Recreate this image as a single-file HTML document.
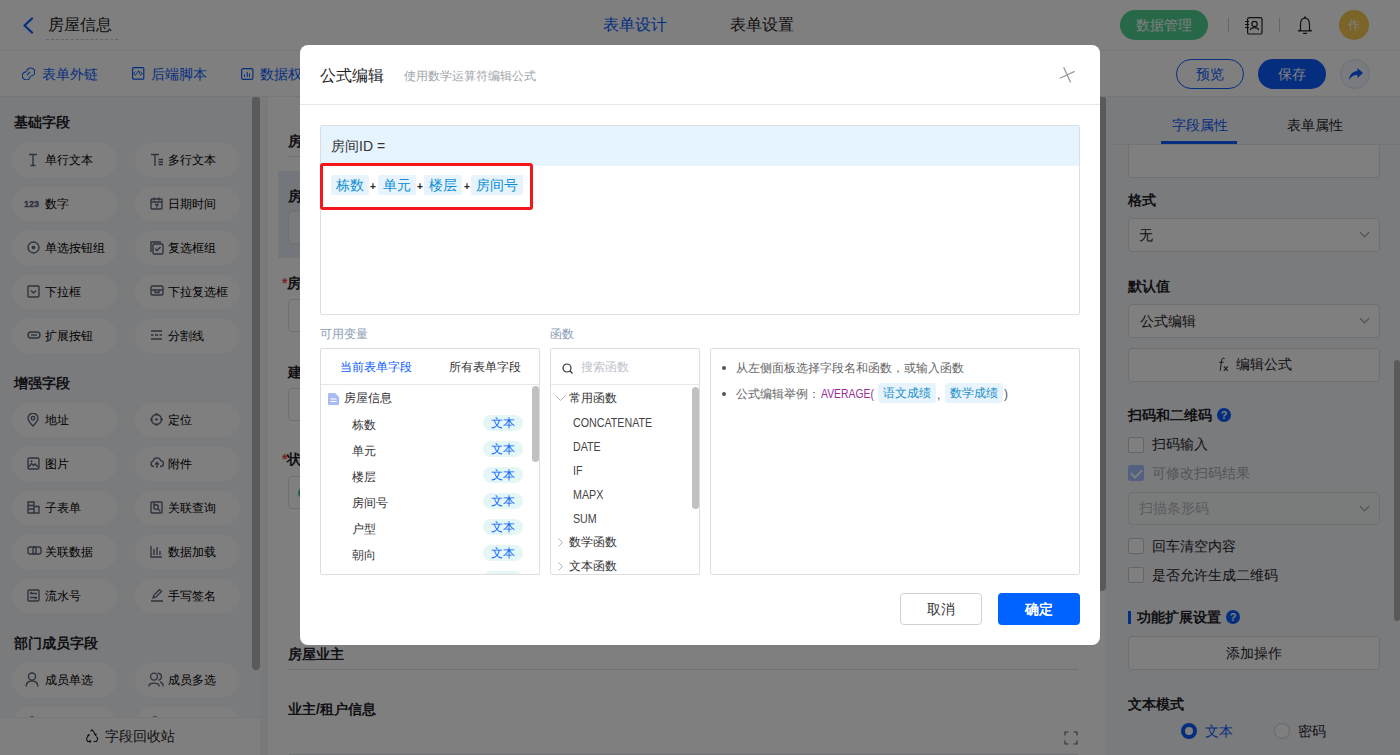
<!DOCTYPE html>
<html><head><meta charset="utf-8">
<style>
*{box-sizing:border-box;margin:0;padding:0}
html,body{width:1400px;height:755px;overflow:hidden;background:#fff}
body{font-family:"Liberation Sans",sans-serif;color:#1f2329;position:relative}
.a{position:absolute}
.t{position:absolute;white-space:nowrap;line-height:1}
#hdr{left:0;top:0;width:1400px;height:50px;background:#fff}
#tb{left:0;top:50px;width:1400px;height:45px;background:#fff}
#lp{left:0;top:95px;width:260px;height:660px;background:#f5f6f9}
#mid{left:260px;top:95px;width:850px;height:660px;background:#f3f4f7}
#rp{left:1106px;top:95px;width:294px;height:660px;background:#f4f6f9;border-top-left-radius:6px}
.chip{position:absolute;width:105px;height:34px;border-radius:17px;background:#fff}
.chip .ic{position:absolute;left:15px;top:10px;line-height:0}
.chip .tx{position:absolute;left:33px;top:10px;font-size:12px;line-height:14px;color:#000;white-space:nowrap}
.sec{position:absolute;left:14px;font-size:14px;font-weight:bold;line-height:14px;color:#1f2329}
.sel{border:1px solid #dee0e3;border-radius:4px;background:#fff}
.sel:after{content:"";position:absolute;right:11px;top:10px;width:6px;height:6px;border-right:1.2px solid #8f959e;border-bottom:1.2px solid #8f959e;transform:rotate(45deg)}
.sel.dis{background:#f5f6f7}
.qm{width:14px;height:14px;border-radius:7px;background:#0a5cff}
.qm:after{content:"?";position:absolute;left:0;top:1px;width:14px;text-align:center;font-size:11px;line-height:12px;font-weight:bold;color:#fff}
.cb{width:16px;height:16px;border:1px solid #c9cdd4;border-radius:2px;background:#fff}
.cb.on{background:#a3c3ff;border-color:#a3c3ff}
.cb.on:after{content:"";position:absolute;left:4px;top:1px;width:5px;height:9px;border-right:2px solid #fff;border-bottom:2px solid #fff;transform:rotate(45deg)}
#ov{left:0;top:0;width:1400px;height:755px;background:rgba(0,0,0,.5)}
#modal{left:300px;top:45px;width:800px;height:600px;background:#fff;border-radius:8px}
.tok{position:absolute;height:20px;padding:0 5px;border-radius:2px;background:#e8f4fd;color:#0c8fd2;font-size:14px;line-height:20px;white-space:nowrap}
.tok.s{font-size:12px;padding:0 5px;border-radius:3px;color:#1a8fc8}
.pl{font-size:10px;font-weight:bold;color:#222}
.vr{position:absolute;left:0;width:218px;height:18px}
.vr span{position:absolute;left:31px;top:1px;font-size:12px;line-height:12px;color:#333;white-space:nowrap}
.vr i{position:absolute;left:162px;top:-3px;width:40px;height:16px;border-radius:8px;background:#e5f6f6;color:#0a66ff;font-style:normal;font-size:12px;line-height:17px;text-align:center}
.fn{position:absolute;left:22px;font-size:12px;line-height:12px;color:#444;white-space:nowrap;transform:scaleX(.89);transform-origin:0 0}

</style></head><body>
<!-- HEADER -->
<div id="hdr" class="a">
  <svg class="a" style="left:22px;top:17px" width="12" height="17" viewBox="0 0 12 17"><path d="M10 1.5 L2.5 8.5 L10 15.5" fill="none" stroke="#0a5cff" stroke-width="2.2" stroke-linecap="round" stroke-linejoin="round"/></svg>
  <div class="t" style="left:48px;top:17px;font-size:16px;color:#1f2329">房屋信息</div>
  <div class="a" style="left:46px;top:39px;width:72px;border-top:1px dashed #c9cdd4"></div>
  <div class="t" style="left:603px;top:17px;font-size:16px;color:#0a5cff">表单设计</div>
  <div class="t" style="left:730px;top:17px;font-size:16px;color:#1f2329">表单设置</div>
  <div class="a" style="left:1120px;top:10px;width:88px;height:30px;border-radius:15px;background:#4cd090"></div>
  <div class="t" style="left:1136px;top:18px;font-size:14px;color:#fff">数据管理</div>
  <div class="a" style="left:1228px;top:18px;width:1px;height:14px;background:#c9cdd4"></div>
  <svg class="a" style="left:1244px;top:16px" width="20" height="19" viewBox="0 0 20 19"><rect x="3.6" y="1.6" width="14.4" height="16.4" rx="1.6" fill="none" stroke="#1f2329" stroke-width="1.2"/><circle cx="10.5" cy="8" r="2.7" fill="none" stroke="#1f2329" stroke-width="1.2"/><path d="M6.3 14.2 C6.8 10.8 14.2 10.8 14.7 14.2" fill="none" stroke="#1f2329" stroke-width="1.2"/><path d="M1 5.5h4M1 8.5h4M1 11.5h4" stroke="#1f2329" stroke-width="1.1"/></svg>
  <div class="a" style="left:1279px;top:18px;width:1px;height:14px;background:#c9cdd4"></div>
  <svg class="a" style="left:1296px;top:15px" width="18" height="20" viewBox="0 0 18 20"><path d="M4.5 15 V9.5 C4.5 5.5 6.5 3.2 9 3.2 C11.5 3.2 13.5 5.5 13.5 9.5 V15 L15.5 15.8 H2.5 Z" fill="none" stroke="#1f2329" stroke-width="1.2" stroke-linejoin="round"/><circle cx="9" cy="2.2" r="0.9" fill="#1f2329"/><path d="M7.5 18.3 H10.5" stroke="#1f2329" stroke-width="1.3" stroke-linecap="round"/></svg>
  <div class="a" style="left:1339px;top:10px;width:30px;height:30px;border-radius:15px;background:#f5c84f"></div>
  <div class="t" style="left:1348px;top:19px;font-size:12px;color:#fff">作</div>
</div>
<!-- TOOLBAR -->
<div id="tb" class="a">
  <svg class="a" style="left:22px;top:17px" width="13" height="13" viewBox="0 0 13 13"><path d="M4.76 4.31A4 4 0 1 1 9.39 8.94M8.24 9.49A4 4 0 1 1 3.61 4.86M5.2 7.8L7.8 5.2" fill="none" stroke="#0a5cff" stroke-width="1.1" stroke-linecap="round"/></svg>
  <div class="t" style="left:42px;top:17px;font-size:14px;color:#0a5cff">表单外链</div>
  <svg class="a" style="left:132px;top:17px" width="13" height="13" viewBox="0 0 13 13"><rect x="0.6" y="0.6" width="11.2" height="11.6" rx="1" fill="none" stroke="#0a5cff" stroke-width="1.2"/><path d="M3.5 4.5L1.5 6.5L3.5 8.2L6.6 3.6L8.5 8.5M8.2 4.5L10.6 6.6L9.2 8" fill="none" stroke="#0a5cff" stroke-width="0.9"/></svg>
  <div class="t" style="left:151px;top:17px;font-size:14px;color:#0a5cff">后端脚本</div>
  <svg class="a" style="left:241px;top:18px" width="13" height="13" viewBox="0 0 13 13"><rect x="0.6" y="0.6" width="11.3" height="10.8" rx="1.6" fill="none" stroke="#0a5cff" stroke-width="1.2"/><path d="M3.5 6.5V9M6.3 4V9M8.5 5.5V9" stroke="#0a5cff" stroke-width="1"/></svg>
  <div class="t" style="left:260px;top:17px;font-size:14px;color:#0a5cff">数据权限</div>
  <div class="a" style="left:1176px;top:9px;width:68px;height:30px;border-radius:15px;border:1px solid #0a5cff;background:#fff"></div>
  <div class="t" style="left:1196px;top:17px;font-size:14px;color:#0a5cff">预览</div>
  <div class="a" style="left:1258px;top:9px;width:68px;height:30px;border-radius:15px;background:#0a5cff"></div>
  <div class="t" style="left:1278px;top:17px;font-size:14px;color:#fff">保存</div>
  <div class="a" style="left:1340px;top:9px;width:30px;height:30px;border-radius:15px;border:1px solid #d5def5;background:#f2f6ff"></div>
  <svg class="a" style="left:1348px;top:17px" width="16" height="14" viewBox="0 0 16 14"><path d="M9.5 1 L15 6 L9.5 11 V8 C5.5 8 3 9.5 1 13 C1.5 8 4 4.5 9.5 4 Z" fill="#0a5cff"/></svg>
</div>

<div id="lp" class="a">
<div class="sec" style="top:20px">基础字段</div>
<div class="chip" style="left:12px;top:48px"><span class="ic"><svg width="12" height="14" viewBox="0 0 12 14"><path d="M2 1.5h8M6 1.5v11M3.5 12.5h5" stroke="#5c6478" fill="none" stroke-width="1.35"/></svg></span><span class="tx">单行文本</span></div>
<div class="chip" style="left:135px;top:48px"><span class="ic"><svg width="14" height="14" viewBox="0 0 14 14"><path d="M1 1.5h8M5 1.5v11.5M8.5 6.5h4.5M8.5 9h4.5M8.5 11.5h4.5" stroke="#5c6478" fill="none" stroke-width="1.35"/></svg></span><span class="tx">多行文本</span></div>
<div class="chip" style="left:12px;top:92px"><span class="ic"><svg width="18" height="12" viewBox="0 0 18 12" style="position:relative;left:-3px"><text x="0" y="9.5" font-family="Liberation Sans" font-weight="bold" font-size="9" fill="#5c6478" stroke="#5c6478" stroke-width="0.3">123</text></svg></span><span class="tx">数字</span></div>
<div class="chip" style="left:135px;top:92px"><span class="ic"><svg width="13" height="13" viewBox="0 0 13 13"><rect x="1" y="2" width="11" height="10" rx="1" stroke="#5c6478" fill="none" stroke-width="1.35"/><path d="M1 5h11M4 0.5v3M9 0.5v3M5 7.5h3l-1.5 3" stroke="#5c6478" fill="none" stroke-width="1.35"/></svg></span><span class="tx">日期时间</span></div>
<div class="chip" style="left:12px;top:136px"><span class="ic"><svg width="13" height="13" viewBox="0 0 13 13"><circle cx="6.5" cy="6.5" r="5.5" stroke="#5c6478" fill="none" stroke-width="1.35"/><circle cx="6.5" cy="6.5" r="1.8" fill="#5c6478"/></svg></span><span class="tx">单选按钮组</span></div>
<div class="chip" style="left:135px;top:136px"><span class="ic"><svg width="14" height="14" viewBox="0 0 14 14"><path d="M1 11V1h10" stroke="#5c6478" fill="none" stroke-width="1.35"/><rect x="3" y="3" width="10" height="10" rx="1" stroke="#5c6478" fill="none" stroke-width="1.35"/><path d="M5.2 7.8l1.8 1.8 3.5-3.5" stroke="#5c6478" fill="none" stroke-width="1.35"/></svg></span><span class="tx">复选框组</span></div>
<div class="chip" style="left:12px;top:180px"><span class="ic"><svg width="13" height="13" viewBox="0 0 13 13"><rect x="1" y="1" width="11" height="11" rx="1" stroke="#5c6478" fill="none" stroke-width="1.35"/><path d="M4 5.5l2.5 2.5 2.5-2.5" stroke="#5c6478" fill="none" stroke-width="1.35"/></svg></span><span class="tx">下拉框</span></div>
<div class="chip" style="left:135px;top:180px"><span class="ic"><svg width="14" height="13" viewBox="0 0 14 13"><rect x="1" y="1" width="12" height="9" rx="1.5" stroke="#5c6478" fill="none" stroke-width="1.35"/><path d="M1 5h12M5 5v2.5h4V5" stroke="#5c6478" fill="none" stroke-width="1.35"/></svg></span><span class="tx">下拉复选框</span></div>
<div class="chip" style="left:12px;top:224px"><span class="ic"><svg width="14" height="12" viewBox="0 0 14 12"><rect x="1" y="3" width="12" height="6" rx="3" stroke="#5c6478" fill="none" stroke-width="1.35" stroke-width="1.4"/><path d="M4 6h6" stroke="#5c6478" fill="none" stroke-width="1.35"/></svg></span><span class="tx">扩展按钮</span></div>
<div class="chip" style="left:135px;top:224px"><span class="ic"><svg width="13" height="12" viewBox="0 0 13 12"><path d="M1 2h11M1 6h2.5M5 6h3M9.5 6h2.5M1 10h11" stroke="#5c6478" fill="none" stroke-width="1.35"/></svg></span><span class="tx">分割线</span></div>
<div class="sec" style="top:281px">增强字段</div>
<div class="chip" style="left:12px;top:308px"><span class="ic"><svg width="12" height="14" viewBox="0 0 12 14"><path d="M6 13C6 13 1 8 1 5.2A5 5 0 0 1 11 5.2C11 8 6 13 6 13Z" stroke="#5c6478" fill="none" stroke-width="1.35"/><circle cx="6" cy="5.3" r="1.8" stroke="#5c6478" fill="none" stroke-width="1.35"/></svg></span><span class="tx">地址</span></div>
<div class="chip" style="left:135px;top:308px"><span class="ic"><svg width="13" height="13" viewBox="0 0 13 13"><circle cx="6.5" cy="6.5" r="5" stroke="#5c6478" fill="none" stroke-width="1.35"/><circle cx="6.5" cy="6.5" r="1.3" fill="#5c6478"/><path d="M6.5 0v2.5M6.5 10.5V13M0 6.5h2.5M10.5 6.5H13" stroke="#5c6478" fill="none" stroke-width="1.35"/></svg></span><span class="tx">定位</span></div>
<div class="chip" style="left:12px;top:352px"><span class="ic"><svg width="13" height="13" viewBox="0 0 13 13"><rect x="1" y="1" width="11" height="11" rx="1.5" stroke="#5c6478" fill="none" stroke-width="1.35"/><path d="M1.5 10l3-3.5 2 2 1.5-1.5 3 3" stroke="#5c6478" fill="none" stroke-width="1.35"/><circle cx="4.5" cy="4.2" r="1" fill="#5c6478"/></svg></span><span class="tx">图片</span></div>
<div class="chip" style="left:135px;top:352px"><span class="ic"><svg width="14" height="12" viewBox="0 0 14 12"><path d="M4 9.5H3.5A2.8 2.8 0 0 1 3.2 4 3.8 3.8 0 0 1 10.6 3.6 2.9 2.9 0 0 1 10.5 9.5H10" stroke="#5c6478" fill="none" stroke-width="1.35"/><path d="M7 11V5.5M5 7.5l2-2 2 2" stroke="#5c6478" fill="none" stroke-width="1.35"/></svg></span><span class="tx">附件</span></div>
<div class="chip" style="left:12px;top:396px"><span class="ic"><svg width="13" height="13" viewBox="0 0 13 13"><path d="M1 1h6v11H1zM7 5.5h5V12H7M1 4.5h6M1 8h6" stroke="#5c6478" fill="none" stroke-width="1.35"/></svg></span><span class="tx">子表单</span></div>
<div class="chip" style="left:135px;top:396px"><span class="ic"><svg width="13" height="13" viewBox="0 0 13 13"><rect x="1" y="1" width="11" height="11" rx="1" stroke="#5c6478" fill="none" stroke-width="1.35"/><circle cx="6" cy="6" r="2.3" stroke="#5c6478" fill="none" stroke-width="1.35"/><path d="M7.8 7.8l2.5 2.5M3 3h2" stroke="#5c6478" fill="none" stroke-width="1.35"/></svg></span><span class="tx">关联查询</span></div>
<div class="chip" style="left:12px;top:440px"><span class="ic"><svg width="15" height="11" viewBox="0 0 15 11"><rect x="1" y="2" width="8" height="7" rx="2" stroke="#5c6478" fill="none" stroke-width="1.35"/><rect x="6" y="2" width="8" height="7" rx="2" stroke="#5c6478" fill="none" stroke-width="1.35"/></svg></span><span class="tx">关联数据</span></div>
<div class="chip" style="left:135px;top:440px"><span class="ic"><svg width="13" height="13" viewBox="0 0 13 13"><path d="M1 1v11h11M4 4v6M7 2v8M10 6v4" stroke="#5c6478" fill="none" stroke-width="1.35"/></svg></span><span class="tx">数据加载</span></div>
<div class="chip" style="left:12px;top:484px"><span class="ic"><svg width="13" height="13" viewBox="0 0 13 13"><rect x="1" y="1" width="11" height="11" rx="1" stroke="#5c6478" fill="none" stroke-width="1.35"/><path d="M3 4.5h7M3 8.5h7M5 3l-2 1.5M8 10l2-1.5" stroke="#5c6478" fill="none" stroke-width="1.35"/></svg></span><span class="tx">流水号</span></div>
<div class="chip" style="left:135px;top:484px"><span class="ic"><svg width="14" height="13" viewBox="0 0 14 13"><path d="M3 9l1-3 5.5-5.5 2 2L6 8z M1 12h12" stroke="#5c6478" fill="none" stroke-width="1.35"/></svg></span><span class="tx">手写签名</span></div>
<div class="sec" style="top:541px">部门成员字段</div>
<div class="chip" style="left:12px;top:568px"><span class="ic"><svg width="14" height="15" viewBox="0 0 14 15" style="position:relative;left:-2px;top:-1px"><circle cx="7" cy="4.6" r="3.6" stroke="#5c6478" fill="none" stroke-width="1.35" stroke-width="1.4"/><path d="M1.2 14.5C1.2 10.5 3.5 9 7 9C10.5 9 12.8 10.5 12.8 14.5" stroke="#5c6478" fill="none" stroke-width="1.35" stroke-width="1.4"/></svg></span><span class="tx">成员单选</span></div>
<div class="chip" style="left:135px;top:568px"><span class="ic"><svg width="16" height="15" viewBox="0 0 16 15" style="position:relative;left:-2px;top:-1px"><circle cx="6" cy="4.6" r="3.5" stroke="#5c6478" fill="none" stroke-width="1.35" stroke-width="1.4"/><path d="M0.8 14.5C0.8 10 11.2 10 11.2 14.5M9.8 1.3A3.4 3.4 0 0 1 10.3 8.2M12 10C14.2 10.6 15.2 12 15.2 14.5" stroke="#5c6478" fill="none" stroke-width="1.35" stroke-width="1.4"/></svg></span><span class="tx">成员多选</span></div>
<div class="chip" style="left:12px;top:612px"><span class="ic"><svg width="14" height="15" viewBox="0 0 14 15" style="position:relative;left:-2px;top:-1px"><circle cx="7" cy="4.6" r="3.6" stroke="#5c6478" fill="none" stroke-width="1.35" stroke-width="1.4"/><path d="M1.2 14.5C1.2 10.5 3.5 9 7 9C10.5 9 12.8 10.5 12.8 14.5" stroke="#5c6478" fill="none" stroke-width="1.35" stroke-width="1.4"/></svg></span><span class="tx"></span></div>
<div class="chip" style="left:135px;top:612px"><span class="ic"><svg width="14" height="15" viewBox="0 0 14 15" style="position:relative;left:-2px;top:-1px"><circle cx="7" cy="4.6" r="3.6" stroke="#5c6478" fill="none" stroke-width="1.35" stroke-width="1.4"/><path d="M1.2 14.5C1.2 10.5 3.5 9 7 9C10.5 9 12.8 10.5 12.8 14.5" stroke="#5c6478" fill="none" stroke-width="1.35" stroke-width="1.4"/></svg></span><span class="tx"></span></div>
<div class="a" style="left:252px;top:1px;width:8px;height:574px;border-radius:4px;background:#b4b4b4"></div>
<div class="a" style="left:0;top:622px;width:260px;height:38px;background:#fff;border-top:1px solid #eceef2"></div>
<svg class="a" style="left:84px;top:634px" width="16" height="14" viewBox="0 0 16 14"><path d="M6.5 2.5L8 0.8 9.5 2.5 11.5 6M4.5 6 2.5 9.5 3.5 12.5H6.5M9.5 12.5H12.5L13.8 10 12.5 7.5" fill="none" stroke="#1f2329" stroke-width="1.1"/><path d="M10.5 5.5l1.3 .8.4-1.6M5.5 11l1.2 1.5-1.2 1.2M3.8 7.3 4.4 5.8 5.9 6.3" fill="none" stroke="#1f2329" stroke-width="1.1"/></svg>
<div class="t" style="left:105px;top:634px;font-size:14px;color:#1f2329">字段回收站</div>
</div>
<!-- MIDDLE -->
<div id="mid" class="a">
  <div class="a" style="left:8px;top:0;width:840px;height:660px;background:#fff"></div>
  <div class="t" style="left:28px;top:39px;font-size:14px;font-weight:bold">房屋信息</div>
  <div class="a" style="left:28px;top:61px;width:790px;height:1px;background:#dee0e3"></div>
  <div class="a" style="left:18px;top:76px;width:820px;height:87px;background:#e6ecf7"></div>
  <div class="t" style="left:28px;top:94px;font-size:14px;font-weight:bold">房间ID</div>
  <div class="a" style="left:28px;top:116px;width:790px;height:33px;border:1px solid #dee0e3;border-radius:4px;background:#f5f6f8"></div>
  <div class="t" style="left:22px;top:181px;font-size:14px;font-weight:bold"><span style="color:#f54a45">*</span>房号</div>
  <div class="a" style="left:28px;top:204px;width:790px;height:33px;border:1px solid #dee0e3;border-radius:4px;background:#fff"></div>
  <div class="t" style="left:28px;top:270px;font-size:14px;font-weight:bold">建筑面积</div>
  <div class="a" style="left:28px;top:293px;width:790px;height:33px;border:1px solid #dee0e3;border-radius:4px;background:#fff"></div>
  <div class="t" style="left:22px;top:357px;font-size:14px;font-weight:bold"><span style="color:#f54a45">*</span>状态</div>
  <div class="a" style="left:28px;top:381px;width:790px;height:33px;border:1px solid #dee0e3;border-radius:4px;background:#fff"></div>
  <div class="a" style="left:38px;top:392px;width:40px;height:12px;border-radius:6px;background:#34c77b"></div>
  <div class="t" style="left:28px;top:552px;font-size:14px;font-weight:bold">房屋业主</div>
  <div class="a" style="left:28px;top:574px;width:790px;height:1px;background:#dee0e3"></div>
  <div class="t" style="left:28px;top:607px;font-size:14px;font-weight:bold">业主/租户信息</div>
  <svg class="a" style="left:804px;top:636px" width="14" height="14" viewBox="0 0 14 14"><path d="M1 4.5V1h3.5M9.5 1H13v3.5M13 9.5V13H9.5M4.5 13H1V9.5" fill="none" stroke="#646a73" stroke-width="1.2"/></svg>
  <div class="a" style="left:29px;top:659px;width:789px;height:1px;background:#e3e5e8"></div>
  <div class="a" style="left:838px;top:1px;width:8px;height:495px;border-radius:4px;background:#b4b4b4"></div>
</div>
<!-- RIGHT -->
<div id="rp" class="a"><div class="a" style="left:4px;top:0;width:290px;height:660px">
  <div class="t" style="left:62px;top:23px;font-size:14px;color:#0a5cff">字段属性</div>
  <div class="t" style="left:177px;top:23px;font-size:14px;color:#1f2329">表单属性</div>
  <div class="a" style="left:4px;top:49px;width:286px;height:1px;background:#e5e6eb"></div>
  <div class="a" style="left:51px;top:46px;width:76px;height:3px;background:#0a5cff"></div>
  <div class="a" style="left:18px;top:50px;width:252px;height:33px;border:1px solid #dee0e3;border-top:none;border-radius:0 0 4px 4px;background:#fff"></div>
  <div class="t" style="left:18px;top:98px;font-size:14px;font-weight:bold">格式</div>
  <div class="a sel" style="left:18px;top:123px;width:252px;height:34px"><span class="t" style="left:10px;top:9px;font-size:14px">无</span></div>
  <div class="t" style="left:18px;top:184px;font-size:14px;font-weight:bold">默认值</div>
  <div class="a sel" style="left:18px;top:209px;width:252px;height:34px"><span class="t" style="left:11px;top:9px;font-size:14px">公式编辑</span></div>
  <div class="a" style="left:18px;top:253px;width:252px;height:34px;border:1px solid #dee0e3;border-radius:4px;background:#fff"></div>
  <svg class="a" style="left:107px;top:262px" width="14" height="15" viewBox="0 0 14 15"><path d="M7.6 1.6C6.4 0.6 5 1.2 4.7 3.2L3.2 13.8M2 5.2H6.6" fill="none" stroke="#333" stroke-width="1"/><path d="M6.8 9.3L10.8 13.8M10.8 9.3L6.8 13.8" fill="none" stroke="#333" stroke-width="1.1"/></svg>
  <div class="t" style="left:126px;top:262px;font-size:14px">编辑公式</div>
  <div class="t" style="left:18px;top:313px;font-size:14px;font-weight:bold">扫码和二维码</div>
  <div class="a qm" style="left:107px;top:313px"></div>
  <div class="a cb" style="left:18px;top:342px"></div>
  <div class="t" style="left:42px;top:342px;font-size:14px">扫码输入</div>
  <div class="a cb on" style="left:18px;top:370px"></div>
  <div class="t" style="left:42px;top:371px;font-size:14px;color:#a7abb2">可修改扫码结果</div>
  <div class="a sel dis" style="left:18px;top:397px;width:252px;height:33px"><span class="t" style="left:10px;top:8px;font-size:14px;color:#b5b9bf">扫描条形码</span></div>
  <div class="a cb" style="left:18px;top:443px"></div>
  <div class="t" style="left:42px;top:444px;font-size:14px">回车清空内容</div>
  <div class="a cb" style="left:18px;top:472px"></div>
  <div class="t" style="left:42px;top:473px;font-size:14px">是否允许生成二维码</div>
  <div class="a" style="left:18px;top:516px;width:3px;height:13px;background:#0a5cff"></div>
  <div class="t" style="left:27px;top:515px;font-size:14px;font-weight:bold">功能扩展设置</div>
  <div class="a qm" style="left:116px;top:515px"></div>
  <div class="a" style="left:18px;top:541px;width:252px;height:34px;border:1px solid #dee0e3;border-radius:4px;background:#fff"></div>
  <div class="t" style="left:116px;top:551px;font-size:14px">添加操作</div>
  <div class="t" style="left:18px;top:602px;font-size:14px;font-weight:bold">文本模式</div>
  <div class="a" style="left:71px;top:628px;width:16px;height:16px;border-radius:8px;border:4.5px solid #0a5cff;background:#fff"></div>
  <div class="t" style="left:95px;top:629px;font-size:14px;color:#0a5cff">文本</div>
  <div class="a" style="left:164px;top:628px;width:16px;height:16px;border-radius:8px;border:1px solid #c9cdd4;background:#fff"></div>
  <div class="t" style="left:188px;top:629px;font-size:14px">密码</div>
  <div class="a" style="left:284px;top:265px;width:6px;height:261px;border-radius:3px;background:#b4b4b4"></div>
</div></div>

<div class="a" style="left:0;top:50px;width:1400px;height:1px;background:#eceef1"></div>
<div class="a" style="left:0;top:95px;width:1400px;height:1px;background:#fff"></div>
<div class="a" style="left:0;top:96px;width:1400px;height:1px;background:#eceef2"></div>
<div id="ov" class="a"></div>
<!-- MODAL -->
<div id="modal" class="a">
  <div class="t" style="left:20px;top:23px;font-size:16px;color:#1f2329">公式编辑</div>
  <div class="t" style="left:104px;top:25px;font-size:12px;color:#a0a4aa">使用数学运算符编辑公式</div>
  <svg class="a" style="left:759px;top:22px" width="17" height="17" viewBox="0 0 17 17"><path d="M4.9 0.8L11.4 14.9M1.3 11L15.2 4.7" stroke="#999" stroke-width="1.3" stroke-linecap="round" fill="none"/></svg>
  <div class="a" style="left:0;top:59px;width:800px;height:1px;background:#e8e8e8"></div>
  <!-- editor -->
  <div class="a" style="left:20px;top:80px;width:760px;height:190px;border:1px solid #dedede;border-radius:2px;background:#fff"></div>
  <div class="a" style="left:21px;top:81px;width:758px;height:40px;background:#e6f4ff"></div>
  <div class="t" style="left:31px;top:94px;font-size:14px;color:#333">房间ID =</div>
  <div class="a" style="left:20px;top:118px;width:213px;height:47px;border:3px solid #f5161b;border-radius:3px"></div>
  <div class="tok" style="left:31px;top:130px">栋数</div><div class="t pl" style="left:70px;top:137px">+</div>
  <div class="tok" style="left:78px;top:130px">单元</div><div class="t pl" style="left:117px;top:137px">+</div>
  <div class="tok" style="left:124px;top:130px">楼层</div><div class="t pl" style="left:164px;top:137px">+</div>
  <div class="tok" style="left:171px;top:130px">房间号</div>
  <!-- labels -->
  <div class="t" style="left:20px;top:283px;font-size:12px;color:#8a9bb3">可用变量</div>
  <div class="t" style="left:250px;top:283px;font-size:12px;color:#8a9bb3">函数</div>
  <!-- var panel -->
  <div class="a" style="left:20px;top:303px;width:220px;height:227px;border:1px solid #dedede;border-radius:2px;overflow:hidden">
    <div class="t" style="left:19px;top:12px;font-size:12px;color:#0a5cff">当前表单字段</div>
    <div class="t" style="left:128px;top:12px;font-size:12px;color:#333">所有表单字段</div>
    <div class="a" style="left:0;top:35px;width:218px;height:1px;background:#e4e7ed"></div>
    <svg class="a" style="left:7px;top:44px" width="11" height="12" viewBox="0 0 11 12"><path d="M0 1a1 1 0 0 1 1-1h6l4 4v7a1 1 0 0 1-1 1H1a1 1 0 0 1-1-1z" fill="#a9bbf5"/><path d="M2.5 6h6M2.5 8.5h6" stroke="#fff" stroke-width="1"/></svg>
    <div class="t" style="left:23px;top:43px;font-size:12px;color:#333">房屋信息</div>
    <div class="vr" style="top:69px"><span>栋数</span><i>文本</i></div>
    <div class="vr" style="top:95px"><span>单元</span><i>文本</i></div>
    <div class="vr" style="top:121px"><span>楼层</span><i>文本</i></div>
    <div class="vr" style="top:147px"><span>房间号</span><i>文本</i></div>
    <div class="vr" style="top:173px"><span>户型</span><i>文本</i></div>
    <div class="vr" style="top:199px"><span>朝向</span><i>文本</i></div>
    <div class="vr" style="top:225px"><span></span><i></i></div>
    <div class="a" style="left:211px;top:37px;width:7px;height:76px;border-radius:4px;background:#c1c1c1"></div>
  </div>
  <!-- func panel -->
  <div class="a" style="left:250px;top:303px;width:150px;height:227px;border:1px solid #dedede;border-radius:2px;overflow:hidden">
    <svg class="a" style="left:11px;top:14px" width="12" height="12" viewBox="0 0 12 12"><circle cx="5" cy="5" r="4" fill="none" stroke="#333" stroke-width="1.2"/><path d="M8 8l2.5 2.5" stroke="#333" stroke-width="1.2"/></svg>
    <div class="t" style="left:30px;top:12px;font-size:12px;color:#c0c4cc">搜索函数</div>
    <div class="a" style="left:0;top:35px;width:148px;height:1px;background:#e4e7ed"></div>
    <svg class="a" style="left:4px;top:46px" width="11" height="7" viewBox="0 0 11 7"><path d="M0.5 0.5l5 5 5-5" fill="none" stroke="#b0b4ba" stroke-width="1"/></svg>
    <div class="t" style="left:18px;top:43px;font-size:12px;color:#333">常用函数</div>
    <div class="fn" style="top:68px">CONCATENATE</div>
    <div class="fn" style="top:92px">DATE</div>
    <div class="fn" style="top:116px">IF</div>
    <div class="fn" style="top:140px">MAPX</div>
    <div class="fn" style="top:164px">SUM</div>
    <svg class="a" style="left:7px;top:189px" width="5" height="9" viewBox="0 0 5 9"><path d="M0.5 0.5l4 4-4 4" fill="none" stroke="#b0b4ba" stroke-width="1"/></svg>
    <div class="t" style="left:18px;top:187px;font-size:12px;color:#333">数学函数</div>
    <svg class="a" style="left:7px;top:213px" width="5" height="9" viewBox="0 0 5 9"><path d="M0.5 0.5l4 4-4 4" fill="none" stroke="#b0b4ba" stroke-width="1"/></svg>
    <div class="t" style="left:18px;top:211px;font-size:12px;color:#333">文本函数</div>
    <div class="a" style="left:141px;top:38px;width:7px;height:122px;border-radius:4px;background:#c1c1c1"></div>
  </div>
  <!-- help panel -->
  <div class="a" style="left:410px;top:303px;width:370px;height:227px;border:1px solid #dedede;border-radius:2px">
    <div class="a" style="left:11px;top:17px;width:4px;height:4px;border-radius:2px;background:#555"></div>
    <div class="t" style="left:25px;top:13px;font-size:12px;color:#666">从左侧面板选择字段名和函数，或输入函数</div>
    <div class="a" style="left:11px;top:43px;width:4px;height:4px;border-radius:2px;background:#555"></div>
    <div class="t" style="left:25px;top:39px;font-size:12px;color:#666">公式编辑举例：</div>
    <div class="t" style="left:110px;top:39px;font-size:12px;color:#9b2b9b;transform:scaleX(.865);transform-origin:0 0">AVERAGE(</div>
    <div class="tok s" style="left:167px;top:34px">语文成绩</div>
    <div class="t" style="left:226px;top:40px;font-size:12px;color:#555">,</div>
    <div class="tok s" style="left:234px;top:34px">数学成绩</div>
    <div class="t" style="left:293px;top:39px;font-size:12px;color:#555">)</div>
  </div>
  <div class="a" style="left:600px;top:548px;width:82px;height:32px;border:1px solid #d0d3d6;border-radius:4px;background:#fff"></div>
  <div class="t" style="left:627px;top:557px;font-size:14px;color:#333">取消</div>
  <div class="a" style="left:698px;top:548px;width:82px;height:32px;border-radius:4px;background:#0062ff"></div>
  <div class="t" style="left:725px;top:557px;font-size:14px;color:#fff;font-weight:bold">确定</div>
</div>

</body></html>
